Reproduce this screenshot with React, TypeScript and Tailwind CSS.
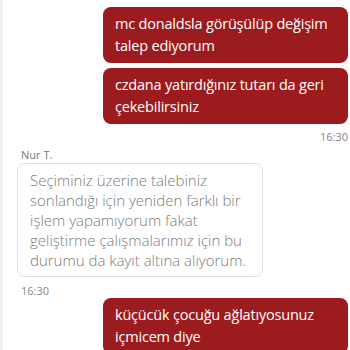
const messages = [
  { from: "me", text: "mc donaldsla görüşülüp değişim talep ediyorum" },
  { from: "me", text: "czdana yatırdığınız tutarı da geri çekebilirsiniz", time: "16:30" },
  {
    from: "agent",
    name: "Nur T.",
    text: "Seçiminiz üzerine talebiniz sonlandığı için yeniden farklı bir işlem yapamıyorum fakat geliştirme çalışmalarımız için bu durumu da kayıt altına alıyorum.",
    time: "16:30",
  },
  { from: "me", text: "küçücük çocuğu ağlatıyosunuz içmicem diye" },
];

export default function App() {
  return (
    <div
      className="h-[350px] w-[350px] overflow-hidden bg-white border-l-[3px] border-[#f2f2f2]"
      style={{ fontFamily: '"Open Sans", "Liberation Sans", sans-serif' }}
    >
      <div className="flex flex-col pt-[7px] pl-[14px] pr-[2px]">
        {messages.map((m, i) =>
          m.from === "me" ? (
            <div key={i} className="flex flex-col items-end mb-[5px]">
              <div className="w-[245px] rounded-[8px] bg-[#9c1b1e] px-3 py-[6px] text-[14.5px] leading-[22px] tracking-[-0.2px] text-white">
                {m.text}
              </div>
              {m.time && (
                <div className="mt-[6px] text-[11px] leading-[14px] text-[#888]">{m.time}</div>
              )}
            </div>
          ) : (
            <div key={i} className="flex flex-col items-start">
              <div className="ml-[4px] -mt-[1px] mb-[1px] text-[11px] leading-[14px] text-[#777]">{m.name}</div>
              <div className="w-[246px] rounded-[8px] border border-[#e2e2e2] bg-white pl-[12px] pr-[10px] py-[6px] text-[15px] font-light leading-[20px] text-[#7a7a7a]">
                {m.text}
              </div>
              {m.time && (
                <div className="ml-[4px] mt-[7px] text-[11px] leading-[14px] text-[#888]">{m.time}</div>
              )}
            </div>
          )
        )}
      </div>
    </div>
  );
}
